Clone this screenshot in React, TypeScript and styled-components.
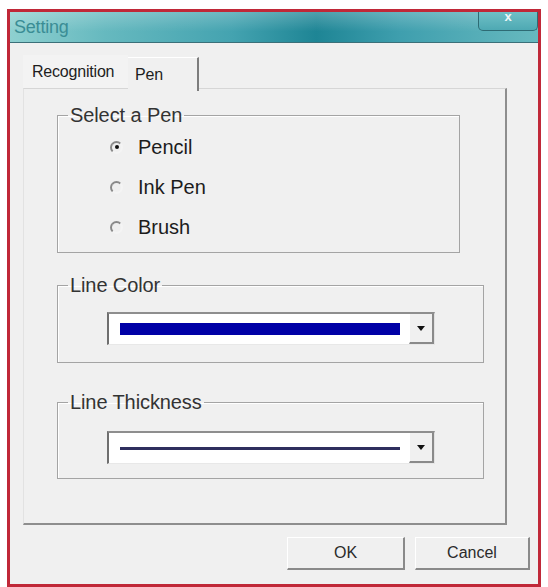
import styled, { createGlobalStyle } from "styled-components";

const GlobalStyle = createGlobalStyle`
  html, body {
    margin: 0;
    padding: 0;
    background: #ffffff;
  }
  body {
    font-family: "Liberation Sans", Arial, sans-serif;
  }
`;

const Window = styled.div`
  box-sizing: border-box;
  width: 534px;
  height: 578px;
  margin: 9px 0 0 7px;
  border: 3px solid #c02838;
  display: flex;
  flex-direction: column;
  background: #f0f0f0;
`;

const TitleBar = styled.div`
  box-sizing: border-box;
  height: 33px;
  display: flex;
  justify-content: space-between;
  align-items: flex-start;
  padding-left: 4px;
  border-bottom: 1px solid #3b7079;
  background:
    linear-gradient(to bottom, rgba(255, 255, 255, 0.22), rgba(255, 255, 255, 0) 65%),
    linear-gradient(
      to right,
      #8ed0d0 0%,
      #66b9bf 18%,
      #44a3b0 42%,
      #1e8595 58%,
      #3f9fae 74%,
      #67b9bf 100%
    );
`;

const Title = styled.span`
  align-self: center;
  font-size: 18px;
  color: #3a8d95;
  letter-spacing: -0.2px;
`;

const CloseButton = styled.div`
  box-sizing: border-box;
  width: 60px;
  height: 19px;
  display: flex;
  justify-content: center;
  border: 1px solid #2e6b74;
  border-top: none;
  border-radius: 0 0 5px 5px;
  background: linear-gradient(to bottom, #6fc0c6, #4ea9b3);
  color: #eef8f8;
  font-size: 13px;
  font-weight: bold;
  line-height: 9px;
`;

const Body = styled.div`
  flex: 1;
  display: flex;
  flex-direction: column;
  padding: 12px 8px 0 13px;
  background: #f0f0f0;
`;

const TabStrip = styled.div`
  display: flex;
  height: 33px;
`;

const Tab = styled.div<{ $active?: boolean; $width: number }>`
  box-sizing: border-box;
  width: ${(p) => p.$width}px;
  height: 34px;
  display: flex;
  align-items: center;
  padding-left: ${(p) => (p.$active ? 7 : 9)}px;
  font-size: 16px;
  color: #1e1e1e;
  letter-spacing: -0.2px;
  position: relative;
  z-index: 1;
  background: ${(p) => (p.$active ? "#f0f0f0" : "#f3f3f3")};
  border-right: ${(p) => (p.$active ? "2px solid #7d7d7d" : "none")};
  border-top: ${(p) => (p.$active ? "1px solid #ffffff" : "none")};
  height: ${(p) => (p.$active ? 34 : 33)}px;
  margin-top: ${(p) => (p.$active ? 2 : 0)}px;
`;

const Panel = styled.div`
  box-sizing: border-box;
  width: 484px;
  height: 437px;
  display: flex;
  flex-direction: column;
  padding: 17px 0 0 33px;
  border-top: 1px solid #d6d6d6;
  border-left: 1px solid #e2e2e2;
  border-right: 2px solid #8e8e8e;
  border-bottom: 2px solid #8e8e8e;
`;

const Group = styled.fieldset<{ $width: number; $mt?: number }>`
  box-sizing: border-box;
  width: ${(p) => p.$width}px;
  min-width: 0;
  margin: ${(p) => p.$mt ?? 0}px 0 0 0;
  padding: 0;
  border: 1px solid #a4a4a4;
  box-shadow: inset 1px 1px 0 #ffffff;
`;

const Legend = styled.legend`
  margin-left: 10px;
  padding: 0 2px;
  font-size: 20px;
  line-height: 18px;
  color: #333333;
  letter-spacing: -0.1px;
`;

const RadioList = styled.div`
  display: flex;
  flex-direction: column;
  padding: 3px 0 5px 52px;
`;

const RadioRow = styled.label`
  height: 40px;
  display: flex;
  align-items: center;
  gap: 15px;
  font-size: 20px;
  color: #1c1c1c;
`;

const RadioCircle = styled.span<{ $checked?: boolean }>`
  box-sizing: border-box;
  width: 13px;
  height: 13px;
  border-radius: 50%;
  border: 2px solid;
  border-color: #8a8a8a #f4f4f4 #f4f4f4 #8a8a8a;
  display: flex;
  align-items: center;
  justify-content: center;

  &::after {
    content: "";
    width: 4px;
    height: 4px;
    border-radius: 50%;
    background: ${(p) => (p.$checked ? "#111111" : "transparent")};
  }
`;

const ComboRow = styled.div<{ $pt: number; $pb: number }>`
  padding: ${(p) => p.$pt}px 0 ${(p) => p.$pb}px 49px;
`;

const Combo = styled.div`
  box-sizing: border-box;
  width: 328px;
  height: 33px;
  display: flex;
  align-items: stretch;
  background: #ffffff;
  border-left: 2px solid #6f6f6f;
  border-top: 2px solid #8e8e8e;
  border-right: 1px solid #e2e2e2;
  border-bottom: 1px solid #e8e8e8;
`;

const ComboValue = styled.div`
  flex: 1;
  display: flex;
  align-items: center;
  padding-left: 11px;
`;

const Swatch = styled.div<{ $color: string; $height: number }>`
  width: 280px;
  height: ${(p) => p.$height}px;
  background: ${(p) => p.$color};
`;

const DropButton = styled.div`
  box-sizing: border-box;
  width: 25px;
  display: flex;
  align-items: center;
  justify-content: center;
  background: #f0f0f0;
  border-left: 1px solid #ffffff;
  border-right: 2px solid #8a8a8a;
  border-bottom: 2px solid #8a8a8a;

  &::after {
    content: "";
    border-left: 4px solid transparent;
    border-right: 4px solid transparent;
    border-top: 5px solid #111111;
  }
`;

const Footer = styled.div`
  display: flex;
  justify-content: flex-end;
  gap: 10px;
  padding: 12px 0 14px 0;
`;

const Button = styled.button<{ $width: number }>`
  box-sizing: border-box;
  width: ${(p) => p.$width}px;
  height: 33px;
  background: #f0f0f0;
  border: none;
  border-top: 1px solid #ffffff;
  border-left: 1px solid #ffffff;
  border-right: 2px solid #8a8a8a;
  border-bottom: 2px solid #8a8a8a;
  font-family: "Liberation Sans", Arial, sans-serif;
  font-size: 16px;
  color: #2a2a2a;
  padding: 0;
`;

const pens = [
  { label: "Pencil", checked: true },
  { label: "Ink Pen", checked: false },
  { label: "Brush", checked: false },
];

export default function App() {
  return (
    <>
      <GlobalStyle />
      <Window>
        <TitleBar>
          <Title>Setting</Title>
          <CloseButton>x</CloseButton>
        </TitleBar>
        <Body>
          <TabStrip>
            <Tab $width={105}>Recognition</Tab>
            <Tab $width={71} $active>
              Pen
            </Tab>
          </TabStrip>
          <Panel>
            <Group $width={403}>
              <Legend>Select a Pen</Legend>
              <RadioList>
                {pens.map((p) => (
                  <RadioRow key={p.label}>
                    <RadioCircle $checked={p.checked} />
                    {p.label}
                  </RadioRow>
                ))}
              </RadioList>
            </Group>
            <Group $width={427} $mt={23}>
              <Legend>Line Color</Legend>
              <ComboRow $pt={18} $pb={17}>
                <Combo>
                  <ComboValue>
                    <Swatch $color="#0000a6" $height={12} />
                  </ComboValue>
                  <DropButton />
                </Combo>
              </ComboRow>
            </Group>
            <Group $width={427} $mt={30}>
              <Legend>Line Thickness</Legend>
              <ComboRow $pt={20} $pb={14}>
                <Combo>
                  <ComboValue>
                    <Swatch $color="#2e2e5e" $height={3} />
                  </ComboValue>
                  <DropButton />
                </Combo>
              </ComboRow>
            </Group>
          </Panel>
          <Footer>
            <Button $width={118}>OK</Button>
            <Button $width={115}>Cancel</Button>
          </Footer>
        </Body>
      </Window>
    </>
  );
}
